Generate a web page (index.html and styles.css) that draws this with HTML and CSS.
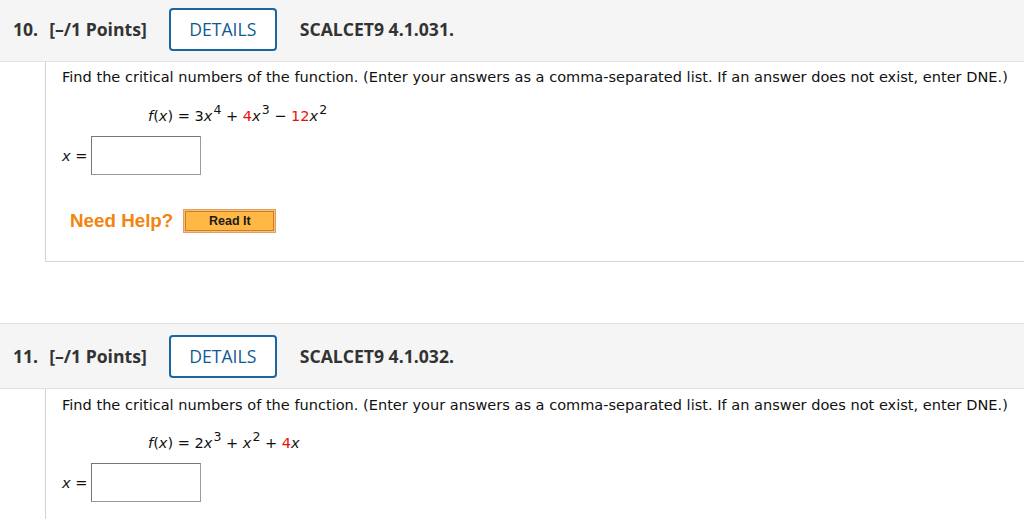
FILE: index.html
```html
<!DOCTYPE html>
<html lang="en">
<head>
<meta charset="utf-8">
<title>Questions</title>
<link rel="stylesheet" href="styles.css">
</head>
<body>
<div class="page">
  <section class="question">
    <header class="q-header">
      <span class="q-num">10.</span>
      <span class="q-points">[–/1 Points]</span>
      <button class="details-btn" type="button">DETAILS</button>
      <span class="q-ref">SCALCET9 4.1.031.</span>
    </header>
    <div class="q-body">
      <p class="prompt">Find the critical numbers of the function. (Enter your answers as a comma-separated list. If an answer does not exist, enter DNE.)</p>
      <p class="formula"><i>f</i>(<i>x</i>) = 3<i>x</i><sup>4</sup> + <span class="red">4</span><i>x</i><sup>3</sup> − <span class="red">12</span><i>x</i><sup>2</sup></p>
      <div class="answer-row">
        <span class="answer-label"><i>x</i> =</span>
        <span class="answer-box"></span>
      </div>
      <div class="help-row">
        <span class="need-help">Need Help?</span>
        <span class="read-it"><span class="read-it-inner">Read It</span></span>
      </div>
    </div>
  </section>

  <section class="question second">
    <header class="q-header">
      <span class="q-num">11.</span>
      <span class="q-points">[–/1 Points]</span>
      <button class="details-btn" type="button">DETAILS</button>
      <span class="q-ref">SCALCET9 4.1.032.</span>
    </header>
    <div class="q-body">
      <p class="prompt">Find the critical numbers of the function. (Enter your answers as a comma-separated list. If an answer does not exist, enter DNE.)</p>
      <p class="formula"><i>f</i>(<i>x</i>) = 2<i>x</i><sup>3</sup> + <i>x</i><sup>2</sup> + <span class="red">4</span><i>x</i></p>
      <div class="answer-row">
        <span class="answer-label"><i>x</i> =</span>
        <span class="answer-box"></span>
      </div>
    </div>
  </section>
</div>
</body>
</html>
```

FILE: styles.css
```css
html, body {
  margin: 0;
  padding: 0;
  background: #ffffff;
  overflow: hidden;
}

.page {
  margin-top: -4px;
  height: 523px;
  overflow: hidden;
}

.question.second {
  margin-top: 61px;
}

.q-header {
  display: flex;
  align-items: center;
  height: 64px;
  padding-left: 13px;
  background: #f5f5f5;
  border-top: 1px solid #e2e2e2;
  border-bottom: 1px solid #e2e2e2;
  font-family: "Open Sans", "DejaVu Sans", sans-serif;
  font-size: 17.6px;
  color: #333333;
}

.q-num {
  font-weight: 700;
  margin-right: 11px;
}

.q-points {
  font-weight: 700;
  margin-right: 22px;
}

.details-btn {
  box-sizing: border-box;
  width: 108px;
  height: 43px;
  margin: 0 23px 0 0;
  padding: 0;
  background: #ffffff;
  border: 2px solid #1a66a0;
  border-radius: 4px;
  font-family: "Open Sans", "DejaVu Sans", sans-serif;
  font-size: 17.6px;
  font-weight: 500;
  color: #0f5a92;
}

.q-ref {
  font-weight: 700;
}

.q-body {
  margin-left: 45px;
  border-left: 1px solid #d4d4d4;
  border-bottom: 1px solid #d4d4d4;
  padding: 6px 0 0 16px;
  height: 193px;
  font-family: "DejaVu Sans", Verdana, sans-serif;
  font-size: 14.55px;
  color: #111111;
}

.second .q-body {
  padding-top: 7px;
  height: 200px;
  border-bottom: none;
}

.prompt {
  margin: 0;
  line-height: 18px;
  white-space: nowrap;
}

.formula {
  margin: 21px 0 0 86px;
  line-height: 18px;
}

.second .formula {
  margin-top: 20px;
}

.formula sup {
  font-size: 12.5px;
  line-height: 0;
  vertical-align: 7px;
  margin-left: 1px;
}

.red {
  color: #e8100c;
}

.answer-row {
  display: flex;
  align-items: center;
  gap: 4px;
  margin-top: 11px;
}

.second .answer-row {
  margin-top: 11px;
}

.answer-box {
  box-sizing: border-box;
  width: 110px;
  height: 39px;
  border: 1px solid #9a9a9a;
  border-left-color: #777777;
  border-top-color: #777777;
  background: #ffffff;
}

.help-row {
  display: flex;
  align-items: center;
  gap: 10px;
  margin: 34px 0 0 8px;
}

.need-help {
  font-family: "Liberation Sans", Arial, sans-serif;
  font-weight: 700;
  font-size: 18.8px;
  color: #f2840f;
}

.read-it {
  display: inline-block;
  box-sizing: border-box;
  width: 93px;
  height: 24px;
  padding: 1px;
  background: #f3c08a;
  border: 1px solid #e3a05a;
}

.read-it-inner {
  display: flex;
  align-items: center;
  justify-content: center;
  box-sizing: border-box;
  height: 100%;
  background: #ffb845;
  border: 1px solid #cf7d1d;
  font-family: "Liberation Sans", Arial, sans-serif;
  font-weight: 700;
  font-size: 12.5px;
  color: #1a1a1a;
}
```
